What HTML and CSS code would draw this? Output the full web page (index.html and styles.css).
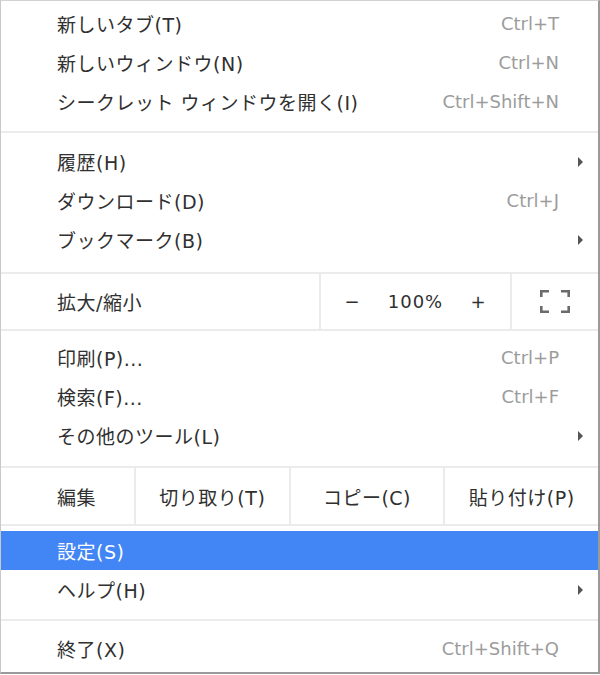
FILE: index.html
```html
<!DOCTYPE html>
<html lang="ja">
<head>
<meta charset="utf-8">
<title>Menu</title>
<link rel="stylesheet" href="styles.css">
</head>
<body>
<div class="menu">
  <div class="group g1">
    <div class="item"><span class="label">新しいタブ(T)</span><span class="accel">Ctrl+T</span><span class="sub"></span></div>
    <div class="item"><span class="label">新しいウィンドウ(N)</span><span class="accel">Ctrl+N</span><span class="sub"></span></div>
    <div class="item"><span class="label">シークレット ウィンドウを開く(I)</span><span class="accel">Ctrl+Shift+N</span><span class="sub"></span></div>
  </div>
  <div class="sep"></div>
  <div class="group g2">
    <div class="item"><span class="label">履歴(H)</span><span class="accel"></span><span class="sub"><span class="arrow"></span></span></div>
    <div class="item"><span class="label">ダウンロード(D)</span><span class="accel">Ctrl+J</span><span class="sub"></span></div>
    <div class="item"><span class="label">ブックマーク(B)</span><span class="accel"></span><span class="sub"><span class="arrow"></span></span></div>
  </div>
  <div class="sep"></div>
  <div class="zoom-row">
    <div class="row-label">拡大/縮小</div>
    <div class="zoom-ctrl"><span>−</span><span>100%</span><span>+</span></div>
    <div class="fs">
      <svg width="30" height="23" viewBox="0 0 30 23" fill="none" stroke="#6b6b6b" stroke-width="2.6">
        <path d="M1.3 7 V1.3 H9"/>
        <path d="M21 1.3 H28.7 V7"/>
        <path d="M1.3 16 V21.7 H9"/>
        <path d="M21 21.7 H28.7 V16"/>
      </svg>
    </div>
  </div>
  <div class="sep"></div>
  <div class="group g3">
    <div class="item"><span class="label">印刷(P)...</span><span class="accel">Ctrl+P</span><span class="sub"></span></div>
    <div class="item"><span class="label">検索(F)...</span><span class="accel">Ctrl+F</span><span class="sub"></span></div>
    <div class="item"><span class="label">その他のツール(L)</span><span class="accel"></span><span class="sub"><span class="arrow"></span></span></div>
  </div>
  <div class="sep"></div>
  <div class="edit-row">
    <div class="row-label">編集</div>
    <div class="btn">切り取り(T)</div>
    <div class="btn">コピー(C)</div>
    <div class="btn">貼り付け(P)</div>
  </div>
  <div class="sep"></div>
  <div class="group g4">
    <div class="item active"><span class="label">設定(S)</span><span class="accel"></span><span class="sub"></span></div>
    <div class="item"><span class="label">ヘルプ(H)</span><span class="accel"></span><span class="sub"><span class="arrow"></span></span></div>
  </div>
  <div class="sep"></div>
  <div class="group g5">
    <div class="item"><span class="label">終了(X)</span><span class="accel">Ctrl+Shift+Q</span><span class="sub"></span></div>
  </div>
</div>
</body>
</html>
```
FILE: styles.css
```css
* { box-sizing: border-box; }
html, body { margin: 0; padding: 0; background: #ffffff; }
body {
  font-family: "DejaVu Sans", "Noto Sans CJK JP", sans-serif;
  font-size: 19px;
  color: #303030;
}
.menu {
  width: 600px;
  height: 674px;
  background: #ffffff;
  border-left: 1px solid #c9c9c9;
  border-top: 1px solid #d2d2d2;
  border-right: 2px solid #9a9a9a;
  border-bottom: 2px solid #9a9a9a;
  display: flex;
  flex-direction: column;
}
.sep { height: 2px; background: #ebebeb; flex: none; }
.group { display: flex; flex-direction: column; }
.g1 { padding: 3px 0 10px; }
.g2 { padding: 9px 0 13px; }
.g3 { padding: 7px 0 11px; }
.g4 { padding: 5px 0 10px; }
.g5 { padding: 8px 0 4px; }
.item {
  height: 39px;
  display: flex;
  align-items: center;
  padding-left: 56px;
}
.item .label { flex: 1; letter-spacing: 0.5px; white-space: nowrap; }
.item .accel { color: #9c9c9c; font-size: 18px; white-space: nowrap; }
.item .sub { width: 39px; flex: none; display: flex; align-items: center; padding-left: 19px; }
.arrow {
  width: 0; height: 0;
  border-left: 5px solid #555555;
  border-top: 5px solid transparent;
  border-bottom: 5px solid transparent;
}
.item.active { background: #4285f4; color: #ffffff; }
.row-label { padding-left: 56px; display: flex; align-items: center; letter-spacing: 0.5px; }
.zoom-row {
  height: 55px;
  display: grid;
  grid-template-columns: 318px 191px 1fr;
}
.zoom-ctrl {
  border-left: 2px solid #ebebeb;
  display: grid;
  grid-template-columns: repeat(3, 1fr);
  align-items: center;
  justify-items: center;
  font-size: 18px;
  letter-spacing: 1px;
}
.fs {
  border-left: 2px solid #ebebeb;
  display: flex;
  align-items: center;
  justify-content: center;
}
.edit-row {
  height: 56px;
  display: grid;
  grid-template-columns: 133px repeat(3, 1fr);
}
.btn {
  border-left: 2px solid #ebebeb;
  display: flex;
  align-items: center;
  justify-content: center;
  letter-spacing: 0.5px;
  white-space: nowrap;
}
```
